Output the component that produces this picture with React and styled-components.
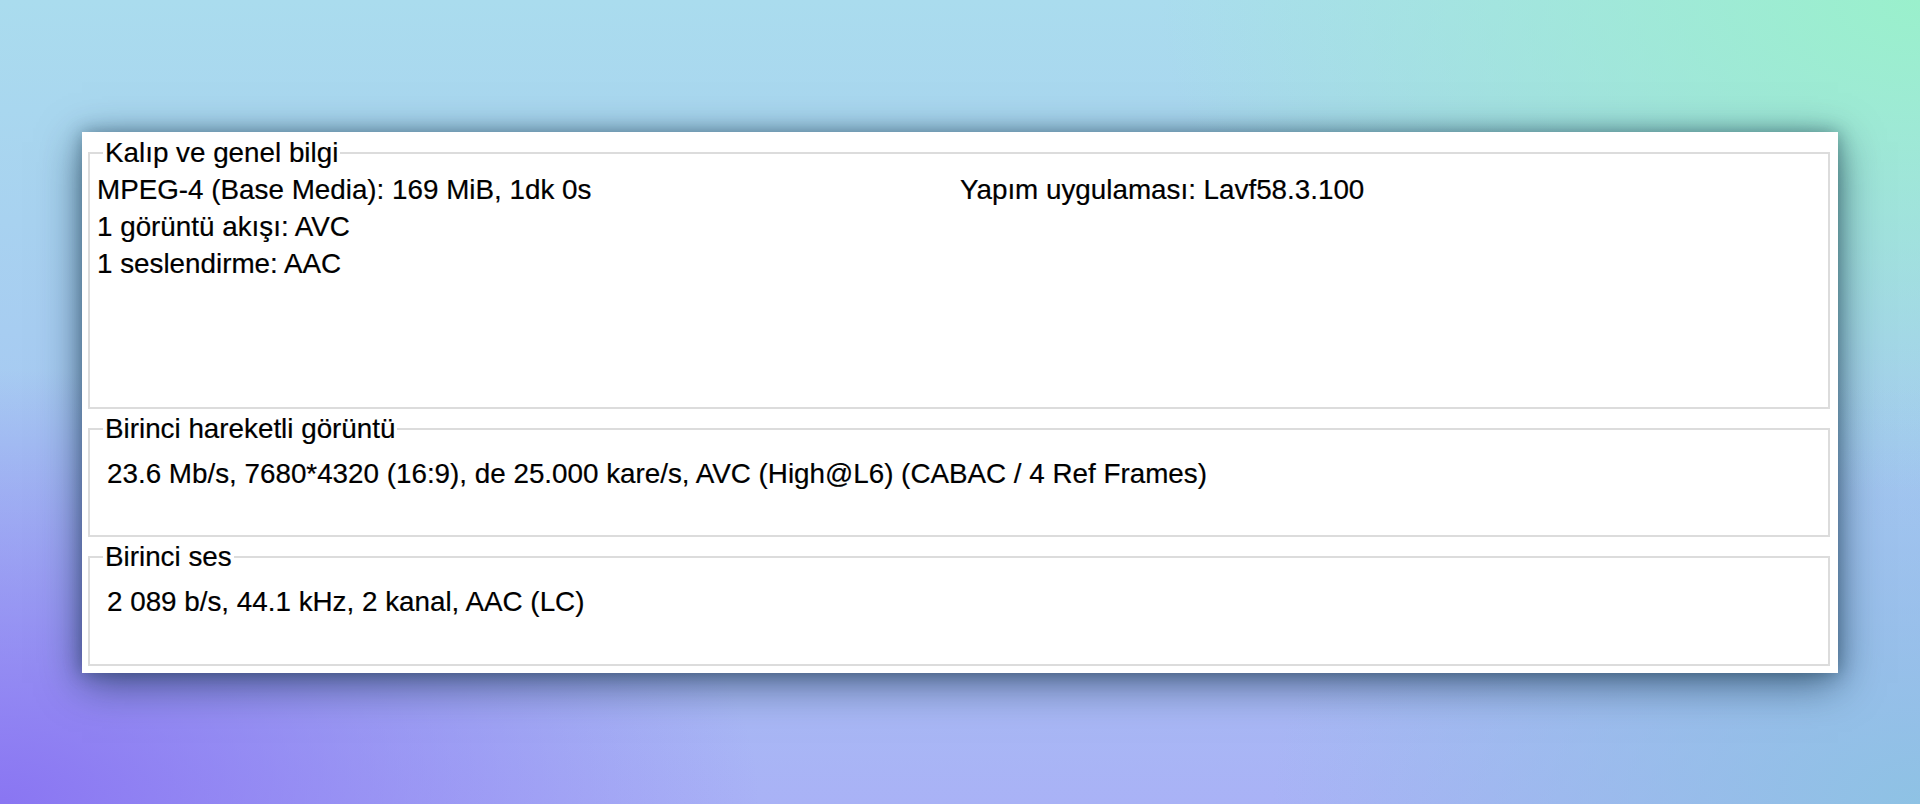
import React from 'react';
import styled, { createGlobalStyle } from 'styled-components';

const GlobalStyle = createGlobalStyle`
  html, body {
    margin: 0;
    padding: 0;
  }
  body {
    font-family: "Liberation Sans", Arial, sans-serif;
    color: #000;
  }
`;

const Backdrop = styled.div`
  min-height: 100vh;
  display: flex;
  align-items: center;
  justify-content: center;
  background:
    radial-gradient(ellipse 55% 75% at 0% 100%, rgba(136, 114, 242, 0.95), rgba(136, 114, 242, 0) 72%),
    radial-gradient(ellipse 55% 85% at 100% 0%, rgba(154, 240, 204, 1), rgba(154, 240, 204, 0) 72%),
    radial-gradient(ellipse 45% 70% at 100% 100%, rgba(142, 194, 228, 1), rgba(142, 194, 228, 0) 75%),
    linear-gradient(180deg, #aadcee 0%, #a6c8f2 55%, #a9b2f6 100%);
`;

const Panel = styled.div`
  width: 1756px;
  box-sizing: border-box;
  padding: 5px 8px 7px 6px;
  background: #fff;
  display: flex;
  flex-direction: column;
  gap: 4px;
  box-shadow: 0 10px 40px rgba(10, 40, 60, 0.6), 0 0 16px rgba(10, 40, 60, 0.35);
`;

const Group = styled.fieldset`
  margin: 0;
  padding: 0 7px;
  border: 2px solid #dcdcdc;
  min-width: 0;
`;

const Legend = styled.legend`
  margin-left: 6px;
  padding: 0 2px;
  font-size: 27.8px;
  line-height: 32px;
  -webkit-text-stroke: 0.2px #000;
`;

const Body = styled.div`
  box-sizing: border-box;
  height: ${(p) => p.height}px;
  padding-top: ${(p) => p.top}px;
  padding-left: ${(p) => p.indent || 0}px;
  font-size: 27.8px;
  line-height: 37px;
  -webkit-text-stroke: 0.2px #000;
`;

const Columns = styled.div`
  display: grid;
  grid-template-columns: 863px 1fr;
`;

const Line = styled.div`
  white-space: nowrap;
`;

export default function App() {
  return (
    <>
      <GlobalStyle />
      <Backdrop>
        <Panel>
          <Group>
            <Legend>Kalıp ve genel bilgi</Legend>
            <Body height={238} top={2}>
              <Columns>
                <div>
                  <Line>MPEG-4 (Base Media): 169 MiB, 1dk 0s</Line>
                  <Line>1 görüntü akışı: AVC</Line>
                  <Line>1 seslendirme: AAC</Line>
                </div>
                <div>
                  <Line>Yapım uygulaması: Lavf58.3.100</Line>
                </div>
              </Columns>
            </Body>
          </Group>
          <Group>
            <Legend>Birinci hareketli görüntü</Legend>
            <Body height={90} top={10} indent={10}>
              <Line>23.6 Mb/s, 7680*4320 (16:9), de 25.000 kare/s, AVC (High@L6) (CABAC / 4 Ref Frames)</Line>
            </Body>
          </Group>
          <Group>
            <Legend>Birinci ses</Legend>
            <Body height={91} top={10} indent={10}>
              <Line>2 089 b/s, 44.1 kHz, 2 kanal, AAC (LC)</Line>
            </Body>
          </Group>
        </Panel>
      </Backdrop>
    </>
  );
}
